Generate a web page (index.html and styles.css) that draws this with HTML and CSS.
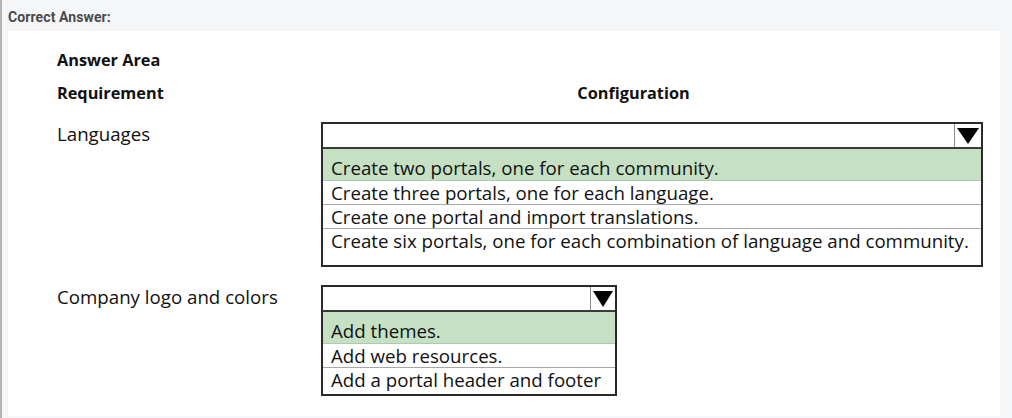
FILE: index.html
```html
<!DOCTYPE html>
<html>
<head>
<meta charset="utf-8">
<link rel="stylesheet" href="styles.css">
</head>
<body>
<div class="page">
  <div class="title">Correct Answer:</div>
  <div class="panel">
    <div class="area-title">Answer Area</div>
    <div class="row head">
      <div class="req">Requirement</div>
      <div class="conf">Configuration</div>
    </div>
    <div class="row item first">
      <div class="label">Languages</div>
      <div class="dropdown wide">
        <div class="dd-head"><div class="dd-field"></div><div class="dd-btn"><span class="tri"></span></div></div>
        <div class="opt sel">Create two portals, one for each community.</div>
        <div class="opt">Create three portals, one for each language.</div>
        <div class="opt">Create one portal and import translations.</div>
        <div class="opt last">Create six portals, one for each combination of language and community.</div>
      </div>
    </div>
    <div class="row item second">
      <div class="label">Company logo and colors</div>
      <div class="dropdown narrow">
        <div class="dd-head"><div class="dd-field"></div><div class="dd-btn"><span class="tri"></span></div></div>
        <div class="opt sel">Add themes.</div>
        <div class="opt">Add web resources.</div>
        <div class="opt last">Add a portal header and footer</div>
      </div>
    </div>
  </div>
</div>
</body>
</html>
```

FILE: styles.css
```css
html, body {
  margin: 0;
  padding: 0;
  background: #f5f6f8;
}
.page {
  width: 1012px;
  height: 418px;
  box-sizing: border-box;
  border-left: 2px solid #b4b4b4;
  padding: 8px 12px 0 6px;
  overflow: hidden;
}
.title {
  font-family: Roboto, "Liberation Sans", sans-serif;
  font-weight: 700;
  font-size: 14px;
  letter-spacing: 0.1px;
  color: #4a4a4a;
  line-height: 18px;
  height: 23px;
}
.panel {
  background: #ffffff;
  height: 385px;
  box-sizing: border-box;
  padding: 18px 0 0 49px;
  font-family: "Open Sans", "Noto Sans", sans-serif;
  color: #111;
}
.area-title {
  font-weight: 700;
  font-size: 16.3px;
  line-height: 22px;
}
.row {
  display: flex;
}
.head {
  margin-top: 11px;
  font-weight: 700;
  font-size: 16.3px;
  line-height: 22px;
}
.req {
  width: 264px;
}
.conf {
  width: 625px;
  text-align: center;
}
.label {
  width: 264px;
  font-size: 18.7px;
  line-height: 24px;
  padding-top: 0;
}
.item.first {
  margin-top: 18px;
}
.item.second {
  margin-top: 18px;
}
.dropdown {
  border: 2px solid #2a2a2a;
  box-sizing: border-box;
}
.dropdown.wide {
  width: 662px;
  padding-bottom: 13px;
}
.dropdown.narrow {
  width: 296px;
  padding-bottom: 3px;
}
.dd-head {
  display: flex;
  height: 23px;
  border-bottom: 2px solid #3a3a3a;
}
.dd-field {
  flex: 1;
}
.dd-btn {
  width: 26px;
  border-left: 1px solid #8a8a8a;
  display: flex;
  align-items: center;
  justify-content: center;
}
.tri {
  width: 0;
  height: 0;
  margin-top: 1px;
  border-left: 11px solid transparent;
  border-right: 11px solid transparent;
  border-top: 16px solid #000;
}
.narrow .dd-btn {
  width: 24px;
}
.narrow .tri {
  border-left-width: 10px;
  border-right-width: 10px;
  border-top-width: 16px;
}
.opt {
  font-size: 18.7px;
  line-height: 23px;
  padding-left: 8px;
  border-bottom: 1px solid #a8a8a8;
  white-space: nowrap;
  color: #111;
}
.opt.sel {
  background: #c5e0c3;
  padding-top: 7px;
  padding-bottom: 1px;
  border-bottom-color: #b0c8b0;
}
.opt.last {
  border-bottom: none;
}
```
